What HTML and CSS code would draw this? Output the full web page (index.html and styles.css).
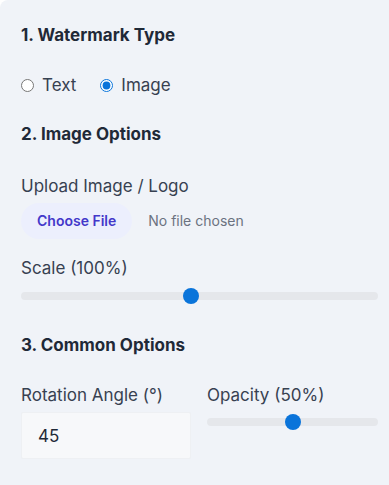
FILE: index.html
```html
<!DOCTYPE html>
<html lang="en">
<head>
<meta charset="utf-8">
<title>Watermark options</title>
<link rel="stylesheet" href="styles.css">
</head>
<body>
<div class="panel">
  <h2 class="heading">1. Watermark Type</h2>
  <div class="radios">
    <label class="radio"><input type="radio" name="wtype" value="text"><span>Text</span></label>
    <label class="radio"><input type="radio" name="wtype" value="image" checked><span>Image</span></label>
  </div>

  <h2 class="heading heading-2">2. Image Options</h2>
  <label class="field-label label-upload" for="file">Upload Image / Logo</label>
  <div class="file-row">
    <span class="file-btn">Choose File</span>
    <span class="file-name">No file chosen</span>
  </div>
  <label class="field-label label-scale" for="scale">Scale (100%)</label>
  <input class="range range-scale" id="scale" type="range" min="10" max="200" value="100">

  <h2 class="heading heading-3">3. Common Options</h2>
  <div class="cols">
    <div class="col">
      <label class="field-label" for="rot">Rotation Angle (°)</label>
      <input class="num" id="rot" type="text" value="45">
    </div>
    <div class="col">
      <label class="field-label" for="op">Opacity (50%)</label>
      <input class="range range-op" id="op" type="range" min="0" max="100" value="50">
    </div>
  </div>
</div>
</body>
</html>
```

FILE: styles.css
```css
* { box-sizing: border-box; }
html, body { margin: 0; padding: 0; background: #ffffff; }
body {
  font-family: Inter, "Noto Sans", sans-serif;
  color: #374151;
  width: 389px;
  height: 485px;
  overflow: hidden;
}
.panel {
  width: 389px;
  height: 485px;
  overflow: hidden;
  background: #f0f3f8;
  border-top-left-radius: 8px;
  padding: 23px 11px 0 21px;
  display: flex;
  flex-direction: column;
}
.panel > * { flex: none; }
.heading {
  margin: 0;
  font-size: 17px;
  line-height: 24px;
  font-weight: 700;
  color: #1f2937;
}
.radios {
  margin-top: 26px;
  display: flex;
  gap: 24px;
  height: 24px;
  align-items: center;
}
.radio {
  display: flex;
  align-items: center;
  font-size: 17px;
  line-height: 24px;
  color: #374151;
}
.radio input {
  margin: 0 8px 0 0;
  width: 13px;
  height: 13px;
  accent-color: #0a74da;
}
.heading-2 { margin-top: 25px; }
.field-label {
  display: block;
  font-size: 17px;
  line-height: 24px;
  color: #374151;
}
.label-upload { margin-top: 28px; }
.file-row {
  margin-top: 5px;
  display: flex;
  align-items: center;
  height: 36px;
}
.file-btn {
  background: #eceffd;
  color: #4338ca;
  font-weight: 600;
  font-size: 14px;
  line-height: 20px;
  padding: 8px 16px;
  border-radius: 999px;
  margin-right: 16px;
}
.file-name {
  font-size: 14px;
  line-height: 20px;
  color: #6b7280;
}
.label-scale { margin-top: 17px; }
.range {
  -webkit-appearance: none;
  appearance: none;
  display: block;
  margin: 0;
  height: 8px;
  border-radius: 8px;
  background: #e5e7eb;
  outline: none;
}
.range::-webkit-slider-thumb {
  -webkit-appearance: none;
  appearance: none;
  width: 16px;
  height: 16px;
  border-radius: 50%;
  background: #0a74da;
  border: none;
}
.range-scale {
  margin-top: 12px;
  width: 357px;
}
.heading-3 { margin-top: 33px; }
.cols {
  margin-top: 26px;
  display: grid;
  grid-template-columns: 170px 171px;
  column-gap: 16px;
}
.col { display: flex; flex-direction: column; }
.num {
  margin-top: 5px;
  width: 100%;
  height: 47px;
  padding: 0 16px;
  border: 1px solid #eef0f3;
  background: #f7f8fa;
  font-family: Inter, "Noto Sans", sans-serif;
  font-size: 17px;
  color: #1f2937;
  border-radius: 2px;
  outline: none;
}
.range-op {
  margin-top: 11px;
  width: 100%;
}
```
